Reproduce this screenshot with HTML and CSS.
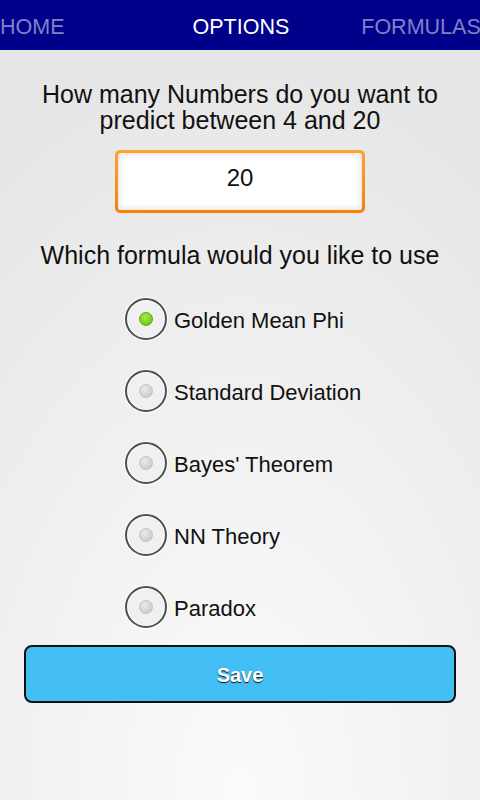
FILE: index.html
```html
<!DOCTYPE html>
<html lang="en">
<head>
<meta charset="utf-8">
<title>Options</title>
<link rel="stylesheet" href="styles.css">
</head>
<body>
<nav class="tabs">
  <span class="tab tab-home">HOME</span>
  <span class="tab tab-active">OPTIONS</span>
  <span class="tab tab-formulas">FORMULAS</span>
</nav>
<main class="content">
  <p class="question">How many Numbers do you want to<br>predict between 4 and 20</p>
  <div class="field">
    <div class="field-input">20</div>
  </div>
  <p class="question question-formula">Which formula would you like to use</p>
  <ul class="radios">
    <li class="radio-row"><span class="radio"><span class="dot dot-on"></span></span><span class="radio-label">Golden Mean Phi</span></li>
    <li class="radio-row"><span class="radio"><span class="dot"></span></span><span class="radio-label">Standard Deviation</span></li>
    <li class="radio-row"><span class="radio"><span class="dot"></span></span><span class="radio-label">Bayes' Theorem</span></li>
    <li class="radio-row"><span class="radio"><span class="dot"></span></span><span class="radio-label">NN Theory</span></li>
    <li class="radio-row"><span class="radio"><span class="dot"></span></span><span class="radio-label">Paradox</span></li>
  </ul>
  <div class="save">Save</div>
</main>
</body>
</html>
```

FILE: styles.css
```css
* { box-sizing: border-box; }
html, body {
  margin: 0;
  padding: 0;
  width: 480px;
  height: 800px;
  overflow: hidden;
}
body {
  font-family: "Liberation Sans", Arial, Helvetica, sans-serif;
  color: #111;
  background: radial-gradient(ellipse 95% 95% at 50% 100%, #fbfbfb 0%, #f3f3f3 40%, #e6e6e6 100%);
}
.tabs {
  display: flex;
  height: 50px;
  background: #00008b;
  padding-top: 4px;
  white-space: nowrap;
  overflow: hidden;
}
.tab {
  font-size: 21.5px;
  line-height: 46px;
  color: #8080c5;
  flex: none;
}
.tab-active {
  color: #fff;
  margin-left: 128px;
}
.tab-formulas {
  margin-left: 72px;
}
.content {
  display: flex;
  flex-direction: column;
  align-items: center;
}
.question {
  margin: 29px 0 0;
  padding-top: 2px;
  font-size: 25px;
  line-height: 26px;
  text-align: center;
}
.field {
  margin-top: 17px;
  width: 250px;
  height: 63px;
  padding: 3px;
  border-radius: 5px;
  background: linear-gradient(#fca52f, #f5800a);
}
.field-input {
  height: 57px;
  background: #fff;
  border-radius: 2px;
  box-shadow: inset 0 0 7px rgba(0, 0, 0, 0.16);
  font-size: 24px;
  line-height: 50px;
  text-align: center;
  color: #111;
}
.question-formula {
  margin-top: 27px;
}
.radios {
  list-style: none;
  margin: 15px 0 0;
  padding: 0 0 0 125px;
  align-self: stretch;
}
.radio-row {
  display: flex;
  align-items: center;
  height: 72px;
}
.radio {
  width: 42px;
  height: 42px;
  border-radius: 50%;
  border: 2px solid #4f4f4f;
  box-shadow: 0 0 0 1px rgba(255, 255, 255, 0.9), inset 0 0 0 1px rgba(255, 255, 255, 0.8);
  background: #f0f0f0;
  display: flex;
  align-items: center;
  justify-content: center;
  flex: none;
}
.dot {
  width: 14px;
  height: 14px;
  border-radius: 50%;
  background: radial-gradient(circle at 40% 35%, #eaeaea 0%, #d2d2d2 60%, #bdbdbd 100%);
  border: 1px solid #c4c4c4;
}
.dot-on {
  background: radial-gradient(circle at 45% 35%, #a6ea4a 0%, #7dd320 55%, #62b514 100%);
  border: 1px solid #5ea818;
}
.radio-label {
  margin-left: 7px;
  padding-top: 4px;
  font-size: 22px;
  color: #111;
}
.save {
  margin-top: 2px;
  width: 432px;
  height: 58px;
  border: 2px solid #111;
  border-radius: 8px;
  background: #43bff5;
  color: #fff;
  font-weight: bold;
  font-size: 20px;
  padding-top: 3px;
  line-height: 51px;
  text-align: center;
  text-shadow: 0 1px 1px rgba(0, 0, 0, 0.9);
}
```
